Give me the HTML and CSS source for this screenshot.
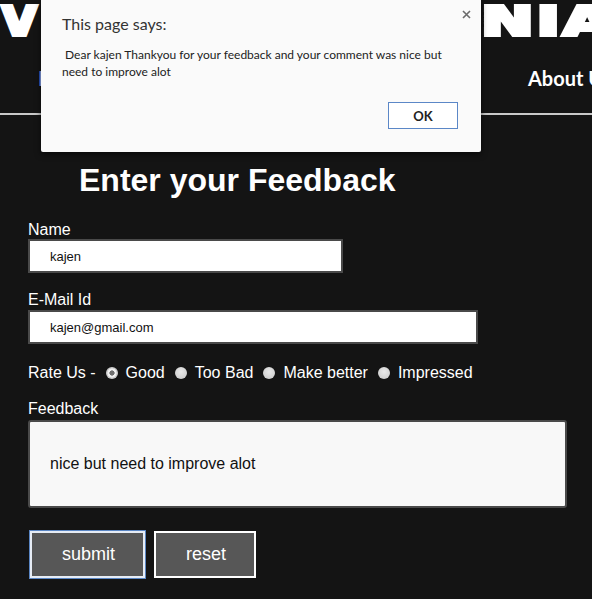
FILE: index.html
```html
<!DOCTYPE html>
<html lang="en">
<head>
<meta charset="utf-8">
<title>Feedback</title>
<link rel="stylesheet" href="styles.css">
</head>
<body>
<header class="site-header">
  <div class="logo"><span class="logo-left">V</span><span class="logo-right">NIA</span></div>
  <nav class="nav">
    <div class="nav-main">
      <a class="nav-link nav-link-active" href="#">Home</a>
    </div>
    <a class="nav-link" href="#">About Us</a>
  </nav>
</header>
<hr class="divider">
<main class="feedback">
  <h1 class="feedback-title">Enter your Feedback</h1>
  <form class="feedback-form">
    <label class="field-label" for="name">Name</label>
    <input class="text-input name-input" id="name" type="text" value="kajen">
    <label class="field-label email-label" for="email">E-Mail Id</label>
    <input class="text-input email-input" id="email" type="text" value="kajen@gmail.com">
    <div class="rate-row">
      <span class="rate-label">Rate Us -</span>
      <input class="radio" type="radio" name="rate" checked><span class="radio-text">Good</span>
      <input class="radio" type="radio" name="rate"><span class="radio-text">Too Bad</span>
      <input class="radio" type="radio" name="rate"><span class="radio-text">Make better</span>
      <input class="radio" type="radio" name="rate"><span class="radio-text">Impressed</span>
    </div>
    <label class="field-label feedback-label" for="fb">Feedback</label>
    <textarea class="feedback-text" id="fb">nice but need to improve alot</textarea>
    <div class="actions">
      <button class="btn btn-submit" type="button">submit</button>
      <button class="btn btn-reset" type="button">reset</button>
    </div>
  </form>
</main>
<div class="dialog">
  <span class="dialog-close"><svg width="9" height="9" viewBox="0 0 9 9"><path d="M1 1L8 8M8 1L1 8" stroke="#6b6b6b" stroke-width="1.6" fill="none"/></svg></span>
  <div class="dialog-title">This page says:</div>
  <div class="dialog-message">&nbsp;Dear kajen Thankyou for your feedback and your comment was nice but need to improve alot</div>
  <div class="dialog-actions"><button class="dialog-ok" type="button">OK</button></div>
</div>
</body>
</html>
```
FILE: styles.css
```css
html, body {
  margin: 0;
  padding: 0;
}
body {
  background: #141414;
  color: #fff;
  font-family: "Liberation Sans", Arial, sans-serif;
  overflow: hidden;
  height: 599px;
  position: relative;
}
.site-header {
  padding-top: 4px;
}
.logo {
  display: flex;
  justify-content: space-between;
  height: 33px;
  overflow: hidden;
  font-family: "DejaVu Sans", sans-serif;
  font-weight: 700;
  font-size: 45px;
  line-height: 33px;
  color: #fff;
  -webkit-text-stroke: 4px #fff;
}
.logo-left {
  display: inline-block;
  transform: scaleX(1.05);
  transform-origin: left center;
  margin-left: 1px;
}
.logo-right {
  display: inline-block;
  transform: scaleX(1.4);
  transform-origin: left center;
  margin-right: 16px;
  letter-spacing: 2px;
}
.nav {
  display: grid;
  grid-template-columns: 490px auto;
  margin-top: 29px;
  padding-left: 38px;
  font-family: Lato, sans-serif;
  font-weight: 700;
  font-size: 20px;
  line-height: 24px;
  white-space: nowrap;
}
.nav-main {
  display: flex;
}
.nav-link {
  color: #fff;
  text-decoration: none;
}
.nav-link-active {
  color: #8fa6ee;
}
.divider {
  border: none;
  height: 2px;
  background: #c9c9c9;
  margin: 23px 0 0;
}
.feedback {
  padding: 0 28px;
}
.feedback-title {
  margin: 47px 0 0 51px;
  font-size: 32px;
  line-height: 36px;
  font-weight: 700;
}
.feedback-form {
  display: flex;
  flex-direction: column;
  align-items: flex-start;
}
.field-label {
  display: block;
  font-size: 16px;
  line-height: 18px;
  margin-top: 23px;
}
.email-label {
  margin-top: 18px;
}
.feedback-label {
  margin-top: 18px;
}
.text-input {
  box-sizing: border-box;
  height: 34px;
  border: 2px solid #4a4a4a;
  background: #fff;
  padding: 0 20px;
  font-family: "Liberation Sans", Arial, sans-serif;
  font-size: 13px;
  color: #111;
  margin-top: 0;
  outline: none;
}
.name-input {
  width: 315px;
}
.email-input {
  width: 450px;
  margin-top: 1px;
}
.rate-row {
  display: flex;
  align-items: center;
  margin-top: 20px;
  font-size: 16px;
  line-height: 18px;
  white-space: pre;
}
.radio {
  appearance: none;
  -webkit-appearance: none;
  width: 12px;
  height: 12px;
  margin: 0 8px 0 10px;
  border-radius: 50%;
  background: radial-gradient(circle at 50% 40%, #e9e9e9 0, #d2d2d2 70%, #c4c4c4 100%);
}
.radio:checked {
  background: radial-gradient(circle, #6f6f6f 0 2.3px, #f2f2f2 2.9px 4.2px, #cdcdcd 4.8px);
}
.feedback-text {
  box-sizing: border-box;
  width: 539px;
  height: 88px;
  margin-top: 2px;
  padding: 33px 20px 0;
  border: 2px solid #4a4a4a;
  border-radius: 3px;
  background: #f8f8f8;
  font-family: "Liberation Sans", Arial, sans-serif;
  font-size: 16px;
  line-height: 18px;
  color: #111;
  resize: none;
  outline: none;
}
.actions {
  display: flex;
  gap: 9px;
  margin-top: 23px;
  margin-left: 2px;
}
.btn {
  box-sizing: border-box;
  height: 47px;
  padding: 0 30px;
  background: #575757;
  color: #fff;
  font-family: "Liberation Sans", Arial, sans-serif;
  font-size: 18px;
  border: 2px solid #fff;
  cursor: pointer;
}
.btn-submit {
  width: 115px;
  border-color: #e6ecf5;
  outline: 1px solid #5a86c4;
}
.btn-reset {
  width: 102px;
}
.dialog {
  position: absolute;
  left: 41px;
  top: 0;
  box-sizing: border-box;
  width: 440px;
  height: 152px;
  padding: 14px 23px 0 21px;
  background: #fafafa;
  border-radius: 0 0 2px 2px;
  box-shadow: 0 2px 6px rgba(0, 0, 0, 0.6);
  font-family: Lato, sans-serif;
  color: #333;
}
.dialog-close {
  position: absolute;
  right: 10px;
  top: 10px;
  line-height: 0;
}
.dialog-title {
  font-size: 16px;
  line-height: 20px;
}
.dialog-message {
  margin-top: 12px;
  font-size: 12px;
  line-height: 17px;
  color: #222;
}
.dialog-actions {
  display: flex;
  justify-content: flex-end;
  margin-top: 22px;
}
.dialog-ok {
  box-sizing: border-box;
  width: 70px;
  height: 27px;
  background: #fff;
  border: 1px solid #5b87c7;
  font-family: Lato, sans-serif;
  font-weight: 700;
  font-size: 13px;
  color: #222;
  padding: 0;
}
```
